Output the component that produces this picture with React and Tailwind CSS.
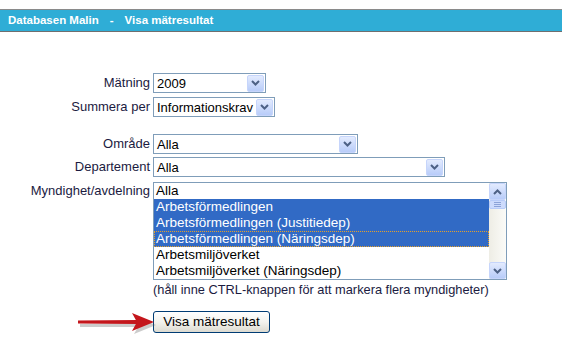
import React from 'react';

const FONT = { fontFamily: '"Liberation Sans", Arial, sans-serif' };

function Chevron({ up = false }) {
  return (
    <svg width="9" height="6" viewBox="0 0 9 6" className={up ? 'rotate-180' : ''}>
      <path d="M1 1 L4.5 4.5 L8 1" fill="none" stroke="#4d6185" strokeWidth="2" />
    </svg>
  );
}

function DropButton({ up }) {
  return (
    <div className="flex h-[17px] w-[17px] items-center justify-center rounded-[2px] border border-[#c6d5fb] bg-gradient-to-b from-[#e3ebfe] to-[#b8ccf9]">
      <Chevron up={up} />
    </div>
  );
}

function Select({ value, width }) {
  return (
    <div
      className="flex h-[20px] items-center justify-between border border-[#7f9db9] bg-white pl-[3px] pr-[1px] text-[13px] text-black"
      style={{ width }}
    >
      <span className="leading-none">{value}</span>
      <DropButton />
    </div>
  );
}

const items = [
  { text: 'Alla' },
  { text: 'Arbetsförmedlingen', sel: true },
  { text: 'Arbetsförmedlingen (Justitiedep)', sel: true },
  { text: 'Arbetsförmedlingen (Näringsdep)', sel: true, focus: true },
  { text: 'Arbetsmiljöverket' },
  { text: 'Arbetsmiljöverket (Näringsdep)' },
];

function ListBox() {
  return (
    <div className="flex h-[98px] w-[354px] border border-[#7f9db9] bg-white">
      <div className="flex-1">
        {items.map((it) => (
          <div
            key={it.text}
            className={`h-[16px] pl-[2px] text-[13.5px] leading-[16px] ${
              it.sel ? 'bg-[#316ac5] text-white' : 'text-black'
            } ${it.focus ? 'outline-1 -outline-offset-1 outline-dotted outline-[#e5a02a]' : ''}`}
          >
            {it.text}
          </div>
        ))}
      </div>
      {/* scrollbar */}
      <div className="flex w-[17px] flex-col bg-gradient-to-r from-[#eeede5] to-[#fbfbf8]">
        <DropButton up />
        <div className="flex h-[9px] flex-col items-center justify-center gap-[1px] rounded-[2px] border border-[#b8ccf9] bg-[#cddbfc]">
          <div className="h-px w-[7px] bg-[#8ca3d8]" />
          <div className="h-px w-[7px] bg-[#8ca3d8]" />
          <div className="h-px w-[7px] bg-[#8ca3d8]" />
        </div>
        <div className="flex-1" />
        <DropButton />
      </div>
    </div>
  );
}

function Arrow() {
  return (
    <svg width="80" height="24" viewBox="0 0 80 24" className="absolute left-[-76px] top-0">
      <path d="M2 11 L60 10 L56 3 L78 12 L56 21 L60 14 L2 14 Z" fill="#555" opacity="0.3" transform="translate(1,2)" />
      <path d="M1 9.5 L61 9 L61 13 L1 12.5 Z" fill="#c4161c" />
      <path d="M55 2 L77 11 L55 20 L60 11 Z" fill="#c4161c" />
    </svg>
  );
}

export default function App() {
  return (
    <div className="min-h-screen bg-white" style={FONT}>
      {/* Header */}
      <div className="pt-[9px]">
        <div className="flex h-[23px] items-center gap-[11px] border-y border-t-[#8a8a8a] border-b-[#6f6f6f] bg-[#2fadd6] pl-[8px] text-[11.5px] font-bold text-white">
          <span>Databasen Malin</span>
          <span>-</span>
          <span>Visa mätresultat</span>
        </div>
      </div>

      {/* Form */}
      <div className="mt-[41px] grid grid-cols-[150px_auto] items-center gap-x-[3px] text-[13px] text-[#1b1b3f]">
        <div className="text-right">Mätning</div>
        <Select value="2009" width={113} />

        <div className="mt-[4px] text-right">Summera per</div>
        <div className="mt-[4px]">
          <Select value="Informationskrav" width={122} />
        </div>

        <div className="mt-[17px] text-right">Område</div>
        <div className="mt-[17px]">
          <Select value="Alla" width={205} />
        </div>

        <div className="mt-[3px] text-right">Departement</div>
        <div className="mt-[3px]">
          <Select value="Alla" width={292} />
        </div>

        <div className="mt-[5px] self-start text-right leading-[17px]">Myndighet/avdelning</div>
        <div className="mt-[5px]">
          <ListBox />
        </div>

        <div />
        <div className="mt-[2px] text-[12.8px] leading-[16px]">(håll inne CTRL-knappen för att markera flera myndigheter)</div>

        <div />
        <div className="relative mt-[13px]">
          <Arrow />
          <button className="h-[22px] w-[117px] rounded-[3px] border border-[#003c74] bg-gradient-to-b from-[#ffffff] via-[#f3f3ee] to-[#dcdad0] text-[13.5px] text-black">
            Visa mätresultat
          </button>
        </div>
      </div>
    </div>
  );
}
